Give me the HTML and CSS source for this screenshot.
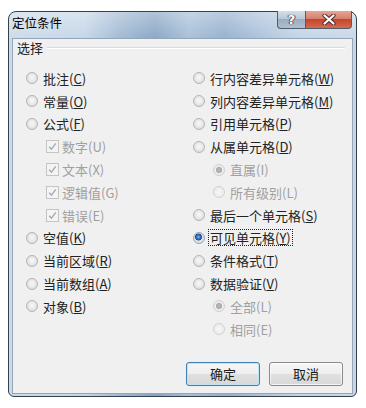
FILE: index.html
```html
<!DOCTYPE html>
<html lang="zh-CN">
<head>
<meta charset="utf-8">
<title>定位条件</title>
<link rel="stylesheet" href="styles.css">
</head>
<body>
<div class="window">
  <div class="titlebar">
    <span class="title">定位条件</span>
    <div class="caption">
      <span class="cbtn help">?</span>
      <span class="cbtn close">
        <svg width="14" height="11" viewBox="0 0 14 11"><path d="M2.5 1.5 L11.5 9.5 M11.5 1.5 L2.5 9.5" stroke="#5a2a2a" stroke-width="4.2" stroke-linecap="round"/><path d="M2.5 1.5 L11.5 9.5 M11.5 1.5 L2.5 9.5" stroke="#ffffff" stroke-width="2.2" stroke-linecap="round"/></svg>
      </span>
    </div>
  </div>
  <div class="client">
    <div class="group-head"><span class="group-label">选择</span><span class="rule"></span></div>
    <div class="cols">
      <div class="col">
        <div class="opt"><span class="radio"></span><span class="lbl">批注(<u>C</u>)</span></div>
        <div class="opt"><span class="radio"></span><span class="lbl">常量(<u>O</u>)</span></div>
        <div class="opt"><span class="radio"></span><span class="lbl">公式(<u>F</u>)</span></div>
        <div class="opt sub dis"><span class="check"><svg width="9" height="9" viewBox="0 0 9 9"><path d="M1.2 4.8 L3.4 7.2 L7.8 1.4" stroke="#a9a9a9" stroke-width="1.4" fill="none"/></svg></span><span class="lbl">数字(U)</span></div>
        <div class="opt sub dis"><span class="check"><svg width="9" height="9" viewBox="0 0 9 9"><path d="M1.2 4.8 L3.4 7.2 L7.8 1.4" stroke="#a9a9a9" stroke-width="1.4" fill="none"/></svg></span><span class="lbl">文本(X)</span></div>
        <div class="opt sub dis"><span class="check"><svg width="9" height="9" viewBox="0 0 9 9"><path d="M1.2 4.8 L3.4 7.2 L7.8 1.4" stroke="#a9a9a9" stroke-width="1.4" fill="none"/></svg></span><span class="lbl">逻辑值(G)</span></div>
        <div class="opt sub dis"><span class="check"><svg width="9" height="9" viewBox="0 0 9 9"><path d="M1.2 4.8 L3.4 7.2 L7.8 1.4" stroke="#a9a9a9" stroke-width="1.4" fill="none"/></svg></span><span class="lbl">错误(E)</span></div>
        <div class="opt"><span class="radio"></span><span class="lbl">空值(<u>K</u>)</span></div>
        <div class="opt"><span class="radio"></span><span class="lbl">当前区域(<u>R</u>)</span></div>
        <div class="opt"><span class="radio"></span><span class="lbl">当前数组(<u>A</u>)</span></div>
        <div class="opt"><span class="radio"></span><span class="lbl">对象(<u>B</u>)</span></div>
      </div>
      <div class="col">
        <div class="opt"><span class="radio"></span><span class="lbl">行内容差异单元格(<u>W</u>)</span></div>
        <div class="opt"><span class="radio"></span><span class="lbl">列内容差异单元格(<u>M</u>)</span></div>
        <div class="opt"><span class="radio"></span><span class="lbl">引用单元格(<u>P</u>)</span></div>
        <div class="opt"><span class="radio"></span><span class="lbl">从属单元格(<u>D</u>)</span></div>
        <div class="opt sub dis"><span class="radio on"></span><span class="lbl">直属(I)</span></div>
        <div class="opt sub dis"><span class="radio"></span><span class="lbl">所有级别(L)</span></div>
        <div class="opt"><span class="radio"></span><span class="lbl">最后一个单元格(<u>S</u>)</span></div>
        <div class="opt"><span class="radio on"></span><span class="lbl focus">可见单元格(<u>Y</u>)</span></div>
        <div class="opt"><span class="radio"></span><span class="lbl">条件格式(<u>T</u>)</span></div>
        <div class="opt"><span class="radio"></span><span class="lbl">数据验证(<u>V</u>)</span></div>
        <div class="opt sub dis"><span class="radio on"></span><span class="lbl">全部(L)</span></div>
        <div class="opt sub dis"><span class="radio"></span><span class="lbl">相同(E)</span></div>
      </div>
    </div>
    <div class="buttons">
      <button class="btn default">确定</button>
      <button class="btn">取消</button>
    </div>
  </div>
</div>
</body>
</html>
```
FILE: styles.css
```css
html, body {
  margin: 0;
  padding: 0;
  background: #ffffff;
}
body {
  font-family: "Noto Sans CJK SC", "Noto Sans", sans-serif;
  font-size: 13px;
  color: #222222;
}
.window {
  box-sizing: border-box;
  width: 349px;
  height: 386px;
  margin: 11px 0 0 8px;
  border: 1px solid #34404c;
  border-radius: 8px 8px 6px 6px;
  padding: 0 3px 2px 3px;
  display: flex;
  flex-direction: column;
  background:
    linear-gradient(to bottom, rgba(255,255,255,0.35), rgba(255,255,255,0) 30px),
    linear-gradient(to right, #cbdaea 0%, #c4d5e7 22%, #9fb8d2 32%, #86a4c4 42%, #a6bed7 52%, #93afcc 62%, #aac1da 72%, #c3d4e6 84%, #c8d7e8 100%);
}
.titlebar {
  height: 26px;
  display: flex;
  flex-shrink: 0;
}
.title {
  font-size: 12.5px;
  line-height: 16px;
  padding: 3px 0 0 0;
  color: #000;
}
.caption {
  margin-left: auto;
  margin-right: 1px;
  margin-top: -1px;
  display: flex;
  align-self: flex-start;
  height: 18px;
}
.cbtn {
  box-sizing: border-box;
  height: 18px;
  display: flex;
  align-items: center;
  justify-content: center;
  border: 1px solid #4f5d6b;
  border-top: none;
}
.help {
  width: 28px;
  border-radius: 0 0 0 4px;
  border-right: none;
  background: linear-gradient(to bottom, #d4dee8 0%, #bac9d8 45%, #9aaec2 50%, #aebfd0 100%);
  color: #fff;
  font-family: "DejaVu Sans", sans-serif;
  font-weight: bold;
  font-size: 13px;
  line-height: 16px;
  text-shadow: 0 0 1px #39485a, 0 0 1px #39485a, 1px 0 0 #4a5868, -1px 0 0 #4a5868;
}
.close {
  width: 47px;
  border-radius: 0 0 4px 0;
  background: linear-gradient(to bottom, #e7a594 0%, #d5816c 45%, #c4452d 50%, #d46a50 100%);
}
.client {
  flex: 1;
  box-sizing: border-box;
  border: 1px solid #94a6b8;
  background: #f0f0f0;
  display: flex;
  flex-direction: column;
}
.group-head {
  display: flex;
  align-items: center;
  height: 18px;
  padding-left: 4px;
}
.group-label {
  line-height: 18px;
}
.rule {
  flex: 1;
  margin: 0 7px 0 4px;
  border-top: 1px solid #d5dde4;
  border-bottom: 1px solid #ffffff;
}
.cols {
  display: grid;
  grid-template-columns: 167px 1fr;
  padding-left: 13px;
  margin-top: 10px;
}
.opt {
  height: 22.8px;
  display: flex;
  align-items: center;
  gap: 5px;
  white-space: nowrap;
}
.opt.sub {
  padding-left: 20px;
}
.dis .lbl {
  color: #a0a0a0;
}
.lbl {
  line-height: 15px;
}
.lbl u {
  text-underline-offset: 1px;
}
.focus {
  outline: 1px dotted #222;
  outline-offset: 0;
  padding: 0 1px;
  margin-left: -1px;
}
.radio {
  box-sizing: border-box;
  width: 12px;
  height: 12px;
  flex-shrink: 0;
  border-radius: 50%;
  border: 1px solid #b4b4b4;
  background: radial-gradient(circle at 50% 45%, #f8f8f8 0, #efefef 30%, #e0e0e0 70%, #d6d6d6 100%);
}
.radio.on {
  border-color: #9aa6b2;
  background: radial-gradient(circle at 45% 40%, #8ec0f0 0, #3b7bd0 1.5px, #1d4f96 3.2px, #e4e4e4 3.8px, #d6d6d6 100%);
}
.dis .radio {
  border-color: #d0d0d0;
  background: radial-gradient(circle, #f6f6f6 0, #eeeeee 60%, #e6e6e6 100%);
}
.dis .radio.on {
  background: radial-gradient(circle, #b8b8b8 0, #acacac 2.8px, #efefef 3.4px, #e4e4e4 100%);
}
.check {
  box-sizing: border-box;
  width: 13px;
  height: 13px;
  flex-shrink: 0;
  margin-right: -2px;
  border: 1px solid #c4c4c4;
  background: #f4f4f4;
  display: flex;
  align-items: center;
  justify-content: center;
}
.check svg {
  display: block;
}
.buttons {
  margin-top: auto;
  display: flex;
  justify-content: flex-end;
  gap: 9px;
  padding: 0 9px 7px 0;
}
.btn {
  box-sizing: border-box;
  width: 74px;
  height: 24px;
  border: 1px solid #8a8a8a;
  border-radius: 3px;
  background: linear-gradient(to bottom, #f6f6f6 0%, #eeeeee 48%, #e0e0e0 52%, #d8d8d8 100%);
  box-shadow: inset 0 0 0 1px rgba(255,255,255,0.7);
  font-family: "Noto Sans CJK SC", "Noto Sans", sans-serif;
  font-size: 13px;
  color: #1a1a1a;
  padding: 0;
  line-height: 20px;
}
.btn.default {
  border-color: #3c7fb1;
  box-shadow: inset 0 0 0 1px #bfe6f7;
}
```
